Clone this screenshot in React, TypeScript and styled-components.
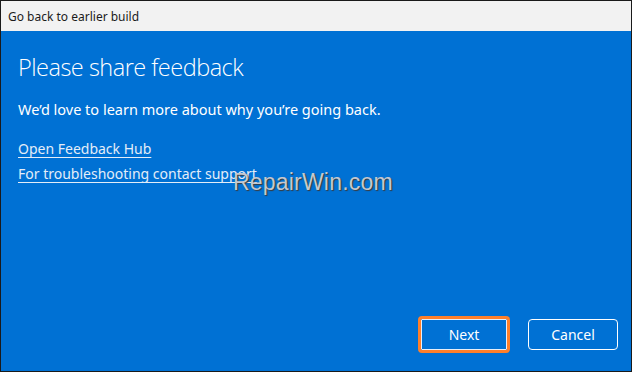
import { createGlobalStyle, styled } from "styled-components";

const GlobalStyle = createGlobalStyle`
  html, body {
    margin: 0;
    padding: 0;
    background: #ffffff;
  }
  body {
    font-family: "Noto Sans", "Open Sans", sans-serif;
  }
`;

const Window = styled.div`
  width: 632px;
  height: 372px;
  box-sizing: border-box;
  border: 1px solid #1a1a1a;
  display: flex;
  flex-direction: column;
  position: relative;
`;

const TitleBar = styled.div`
  height: 30px;
  background: #f2f2f2;
  display: flex;
  align-items: center;
  padding-left: 7px;
  font-size: 12px;
  color: #1b1b1b;
`;

const Body = styled.div`
  flex: 1;
  background: #0071d4;
  color: #ffffff;
  display: flex;
  flex-direction: column;
  padding: 0 13px 21px 17px;
`;

const Content = styled.div`
  flex: 1;
  display: flex;
  flex-direction: column;
`;

const Heading = styled.h1`
  margin: 20px 0 0;
  font-family: "Open Sans", "Noto Sans", sans-serif;
  font-size: 23.5px;
  font-weight: 350;
  line-height: 32px;
  letter-spacing: -0.5px;
`;

const Lead = styled.p`
  margin: 16px 0 0;
  font-size: 14.5px;
  line-height: 20px;
`;

const Links = styled.div`
  margin-top: 20px;
  display: flex;
  flex-direction: column;
  gap: 5px;
`;

const Link = styled.a`
  color: #e4edf8;
  font-size: 14px;
  line-height: 20px;
  text-decoration: underline;
  text-underline-offset: 3px;
  text-decoration-thickness: 1px;
  align-self: flex-start;
`;

const Footer = styled.div`
  display: flex;
  justify-content: flex-end;
  gap: 21px;
`;

const Button = styled.button<{ $highlight?: boolean; $w: number }>`
  width: ${(p) => p.$w}px;
  height: 31px;
  box-sizing: border-box;
  background: transparent;
  border: 1.5px solid #ffffff;
  border-radius: 4px;
  color: #ffffff;
  font-family: "Noto Sans", "Open Sans", sans-serif;
  font-size: 14px;
  padding: 0;
  ${(p) => (p.$highlight ? "outline: 3px solid #ff7f2a; outline-offset: 0; border-radius: 1px; border-color: #e8eef8;" : "")}
`;

const Watermark = styled.div`
  position: absolute;
  left: 232px;
  top: 168px;
  font-family: "Liberation Sans", Arial, sans-serif;
  font-size: 23px;
  color: #c4c8cf;
  text-shadow: 1px 1px 1px #3a3a3a;
  letter-spacing: 0.2px;
`;

export default function App() {
  return (
    <>
      <GlobalStyle />
      <Window>
        <TitleBar>Go back to earlier build</TitleBar>
        <Body>
          <Content>
            <Heading>Please share feedback</Heading>
            <Lead>We’d love to learn more about why you’re going back.</Lead>
            <Links>
              <Link href="#">Open Feedback Hub</Link>
              <Link href="#">For troubleshooting contact support</Link>
            </Links>
          </Content>
          <Footer>
            <Button $highlight $w={86}>Next</Button>
            <Button $w={90}>Cancel</Button>
          </Footer>
        </Body>
        <Watermark>RepairWin.com</Watermark>
      </Window>
    </>
  );
}
